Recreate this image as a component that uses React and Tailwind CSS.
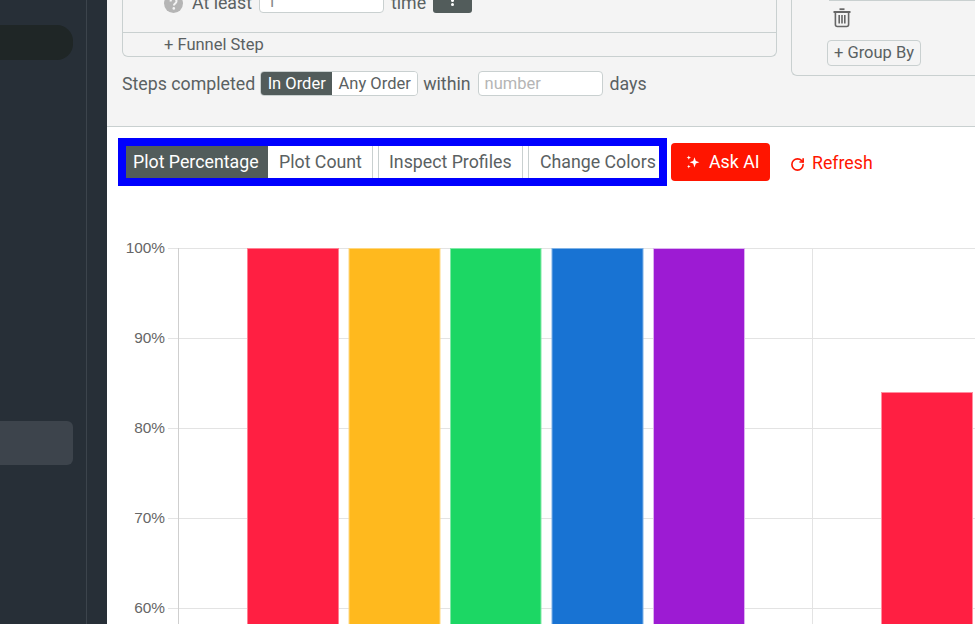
import { RotateCw } from "lucide-react";

const GRID = [
  ["100%", 18],
  ["90%", 108],
  ["80%", 198],
  ["70%", 288],
  ["60%", 378],
];

const BARS = [
  { x: 140, w: 92, y: 18, fill: "#ff1f42", edge: "#ff7f92" },
  { x: 241.5, w: 92, y: 18, fill: "#ffb91e", edge: "#ffd77f" },
  { x: 343, w: 91.5, y: 18, fill: "#1cd764", edge: "#80e9a6" },
  { x: 444.5, w: 92, y: 18, fill: "#1873d3", edge: "#7fb2e6" },
  { x: 546, w: 92, y: 18, fill: "#9d1bd3", edge: "#dcb0f0" },
  { x: 774, w: 92, y: 162, fill: "#ff1f42", edge: "#ff8fa0" },
];

const Sparkles = () => (
  <svg width="16" height="16" viewBox="0 0 16 16" fill="#fff">
    <path d="M9.5 3.2 10.8 7l3.6 1.3-3.6 1.3-1.3 3.8-1.3-3.8-3.6-1.3L8.2 7z" />
    <path d="M3.8 1.4l.6 1.6 1.6.6-1.6.6-.6 1.6-.6-1.6-1.6-.6 1.6-.6z" />
    <path d="M3.8 10.8l.5 1.3 1.3.5-1.3.5-.5 1.3-.5-1.3-1.3-.5 1.3-.5z" />
  </svg>
);

const Trash = () => (
  <svg width="18" height="20" viewBox="0 0 18 20" fill="none" stroke="#666" strokeWidth="1.6">
    <path d="M6.5 1.2h5" strokeWidth="1.8" />
    <path d="M0.5 4h17" strokeWidth="2" />
    <path d="M2.4 5v11.5q0 2 2 2h9.2q2 0 2-2V5" />
    <path d="M6.2 7v8.5M9 7v8.5M11.8 7v8.5" />
  </svg>
);

const Question = () => (
  <svg width="19" height="19" viewBox="0 0 19 19">
    <circle cx="9.5" cy="9.5" r="9.5" fill="#b5b5b5" />
    <path d="M6.6 7.4c0-1.7 1.3-2.7 3-2.7s2.9 1 2.9 2.5c0 2.2-2.6 2.2-2.6 4.2" fill="none" stroke="#f4f4f4" strokeWidth="2" />
    <circle cx="9.8" cy="14.4" r="1.3" fill="#f4f4f4" />
  </svg>
);

const Chart = () => (
  <svg width="868" height="394" className="block">
    {GRID.map(([label, y]) => (
      <g key={label}>
        <line x1="61" x2="868" y1={y + 0.5} y2={y + 0.5} stroke="#e3e3e3" />
        <text x="58" y={y + 5} textAnchor="end" fontSize="15.4" fill="#666" fontFamily="'Liberation Sans', sans-serif">
          {label}
        </text>
      </g>
    ))}
    <line x1="71.5" x2="71.5" y1="18" y2="394" stroke="#cfcfcf" />
    <line x1="705.5" x2="705.5" y1="18" y2="394" stroke="#e3e3e3" />
    {BARS.map((b) => (
      <g key={b.x}>
        <rect x={b.x} y={b.y} width={b.w} height={394 - b.y} fill={b.edge} />
        <rect x={b.x + 1} y={b.y + 1} width={b.w - 2} height={394 - b.y} fill={b.fill} />
      </g>
    ))}
  </svg>
);

export default function App() {
  return (
    <div className="flex h-[624px] w-[975px] overflow-hidden bg-white font-['Roboto',sans-serif] text-[17.75px] text-[#5a6162]">
      <aside className="flex w-[107px] shrink-0 bg-[#272f37]">
        <div className="h-full w-[87px] border-r border-[#3c444c] pr-[13px]">
          <div className="mt-[25px] h-[35px] rounded-r-[16px] bg-[#1f2626]" />
          <div className="mt-[361px] h-[44px] rounded-r-[6px] bg-[#3d444c]" />
        </div>
      </aside>

      <main className="flex min-w-0 flex-1 flex-col">
        <section className="h-[127px] shrink-0 overflow-hidden border-b border-[#c9d0d0] bg-[#f4f4f4]">
          <div className="flex items-start gap-[14px] pl-[15px]">
            <div className="w-[655px] shrink-0">
              <div className="flex h-[57px] flex-col rounded-b-[6px] border border-t-0 border-[#c9d0d0]">
                <div className="h-[33px] border-b border-[#c9d0d0] pl-[41px]">
                  <div className="-mt-[6px] flex items-center gap-[7px]">
                    <Question />
                    <span className="ml-[2px] leading-[19px]">At least</span>
                    <div className="h-[19px] w-[125px] rounded-[4px] border border-[#c9d0d0] bg-white pl-[7px] text-[16.5px] leading-[14px] text-[#888]">
                      1
                    </div>
                    <span className="leading-[19px]">time</span>
                    <div className="flex h-[19px] w-[39px] flex-col items-center justify-end gap-[1.5px] rounded-[3px] bg-[#525c5b] pb-[7px]">
                      <span className="h-[3px] w-[3px] rounded-full bg-white" />
                      <span className="h-[3px] w-[3px] rounded-full bg-white" />
                    </div>
                  </div>
                </div>
                <div className="pl-[41px] text-[16.5px] leading-[23px]">+ Funnel Step</div>
              </div>
              <div className="mt-[14px] flex h-[25px] items-center">
                <span className="mr-[5px] pt-px">Steps completed</span>
                <div className="flex h-[25px] overflow-hidden rounded-[4px] border border-[#c9d0d0] text-[16.5px]">
                  <span className="flex w-[71px] items-center justify-center bg-[#525c5b] pt-px text-white">In Order</span>
                  <span className="flex w-[85px] items-center justify-center bg-white pt-px">Any Order</span>
                </div>
                <span className="ml-[5px] pt-px">within</span>
                <div className="ml-[7px] flex h-[25px] w-[125px] items-center rounded-[4px] border border-[#c9d0d0] bg-white pt-px pl-[6px] text-[16.5px] text-[#b5b5b5]">
                  number
                </div>
                <span className="ml-[7px] pt-px">days</span>
              </div>
            </div>
            <div className="h-[76px] flex-1 rounded-bl-[6px] border border-t-0 border-r-0 border-[#c9d0d0] pl-[35px]">
              <div className="ml-[2px] h-px bg-[#c9d0d0]" />
              <div className="mt-[7px] ml-[6px] flex h-[20px]">
                <Trash />
              </div>
              <div className="mt-[12px] flex h-[26px] w-[94px] items-center justify-center rounded-[4px] border border-[#c9d0d0] text-[16.5px]">
                + Group By
              </div>
            </div>
          </div>
        </section>

        <div className="mt-[11px] flex items-start pl-[11px]">
          <div className="flex h-[48px] w-[549px] border-[8px] border-[#0000ff] bg-white whitespace-nowrap">
            <span className="flex w-[142px] items-center bg-[#525c5b] pl-[7px] text-white">Plot Percentage</span>
            <span className="ml-px flex w-[104px] items-center border-r border-[#c9d0d0] pl-[10px]">Plot Count</span>
            <span className="ml-[5px] flex w-[145px] items-center border-x border-[#c9d0d0] pl-[10px]">Inspect Profiles</span>
            <span className="ml-[5px] flex w-[131px] items-center border-l border-[#c9d0d0] pl-[11px]">Change Colors</span>
          </div>
          <button className="mt-[5px] ml-[4px] flex h-[38px] w-[99px] items-center gap-[8px] rounded-[4px] bg-[#ff1500] pl-[14px] text-white">
            <Sparkles />
            Ask AI
          </button>
          <div className="mt-[6px] ml-[20px] flex h-[38px] items-center gap-[7px] text-[#ff1500]">
            <RotateCw size={15} strokeWidth={2.6} className="mt-[2px]" />
            Refresh
          </div>
        </div>

        <div className="mt-[44px]">
          <Chart />
        </div>
      </main>
    </div>
  );
}
